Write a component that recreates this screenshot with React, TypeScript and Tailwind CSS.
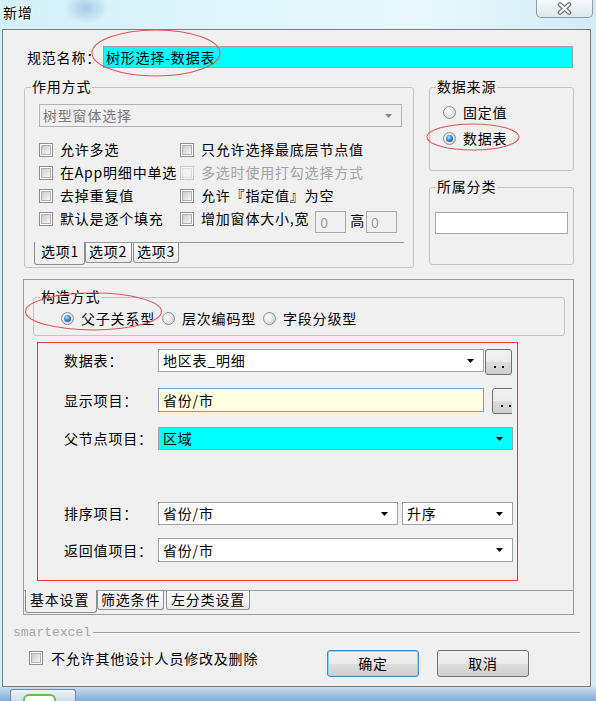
import React from "react";

function Arrow({ gray }: { gray?: boolean }) {
  return (
    <svg width="7" height="4" viewBox="0 0 7 4" className="shrink-0">
      <path d="M0 0H7L3.5 4Z" fill={gray ? "#8a8a8a" : "#000000"} />
    </svg>
  );
}

function CB({ disabled }: { disabled?: boolean }) {
  return disabled ? (
    <span className="flex w-[14px] h-[14px] shrink-0 border border-[#c9c9c9] bg-[#f7f7f7] p-[1px]">
      <span className="block w-full h-full border border-[#dcdcdc] bg-[#f2f2f2]" />
    </span>
  ) : (
    <span className="flex w-[14px] h-[14px] shrink-0 border border-[#8e8f8f] bg-white p-[1px]">
      <span className="block w-full h-full border border-[#b0b0b0] bg-[linear-gradient(135deg,#cbcbcb,#f8f8f8)]" />
    </span>
  );
}

function Radio({ checked }: { checked?: boolean }) {
  return (
    <span className="flex w-[13px] h-[13px] shrink-0 rounded-full border border-[#8e8f8f] bg-[radial-gradient(circle_at_35%_35%,#ffffff,#e0e0e0_60%,#c4c4c4)] items-center justify-center">
      {checked && (
        <span className="block w-[7px] h-[7px] rounded-full bg-[radial-gradient(circle_at_40%_35%,#c4ecff_0%,#3b8fd6_40%,#0b4a88_100%)]" />
      )}
    </span>
  );
}

function Check({ label, disabled }: { label: React.ReactNode; disabled?: boolean }) {
  return (
    <div className="flex items-center gap-[7px]">
      <CB disabled={disabled} />
      <span className={disabled ? "-mt-px text-[#a3a3a3]" : "-mt-px"}>{label}</span>
    </div>
  );
}

function Group({
  title,
  className,
  children,
}: {
  title: string;
  className: string;
  children?: React.ReactNode;
}) {
  return (
    <div className={"relative flex flex-col border border-[#c4c4c4] rounded-[3px] " + className}>
      <span className="absolute -top-[10px] left-[6px] px-[1px] bg-[#f0f0f0] leading-[16px]">{title}</span>
      {children}
    </div>
  );
}

function Combo({ className, text }: { className: string; text?: string }) {
  return (
    <div className={"flex items-center justify-between border border-[#a3a3a3] pl-[4px] pr-[9px] " + className}>
      <span className="-mt-px">{text}</span>
      <Arrow />
    </div>
  );
}

function DotsBtn() {
  return (
    <div className="flex w-[27px] h-[26px] rounded-[3px] border border-[#707070] bg-[linear-gradient(#f2f2f2_0%,#ebebeb_50%,#dddddd_51%,#cfcfcf_100%)] items-end justify-center gap-[6px] pb-[6px] pl-[1px]">
      <span className="block w-[2px] h-[2px] bg-black" />
      <span className="block w-[2px] h-[2px] bg-black" />
    </div>
  );
}

function Btn({ children, focus }: { children: React.ReactNode; focus?: boolean }) {
  return (
    <div
      className={
        "flex w-[92px] h-[27px] rounded-[3px] items-center justify-center bg-[linear-gradient(#f2f2f2_0%,#ebebeb_50%,#dddddd_51%,#cfcfcf_100%)] " +
        (focus
          ? "border border-[#3c8fc4] shadow-[inset_0_0_0_1px_#7fdaf7]"
          : "border border-[#707070]")
      }
    >
      <span className="-mt-px">{children}</span>
    </div>
  );
}

export default function App() {
  return (
    <div className="relative w-[596px] h-[701px] overflow-hidden bg-[radial-gradient(ellipse_22px_16px_at_86px_8px,rgba(80,130,200,0.35),transparent),linear-gradient(90deg,#d2f0f8_0%,#dff5fb_40%,#e8f8fc_70%,#d3ebf5_100%)] font-['Noto_Sans_CJK_SC','Noto_Sans',sans-serif] text-[14px] leading-[16px] tracking-[0.8px] text-black">
      {/* Title bar */}
      <div className="h-[29px] flex items-start justify-between">
        <span className="ml-[3px] mt-[4px] [text-shadow:0_0_6px_#ffffff,0_0_3px_#ffffff]">新增</span>
        <div className="mr-[3px] w-[57px] h-[18px] rounded-b-[5px] border border-t-0 border-[#8f9ea8] bg-[linear-gradient(#f5f9fb,#dbe7ee)] flex items-center justify-center">
          <svg width="17" height="13" viewBox="0 0 17 13">
            <path d="M4 2.5L13 10.5M13 2.5L4 10.5" stroke="#7a7a7a" strokeWidth="4.6" strokeLinecap="round" />
            <path d="M4 2.5L13 10.5M13 2.5L4 10.5" stroke="#f2f2f2" strokeWidth="2.2" strokeLinecap="round" />
          </svg>
        </div>
      </div>

      {/* Window body */}
      <div className="ml-[2px] w-[589px] h-[658px] border border-[#7c7c7c] bg-[#f0f0f0] flex flex-col">
        {/* name row */}
        <div className="mt-[16px] pl-[24px] flex items-center">
          <span className="w-[76px] -mt-px">规范名称：</span>
          <div className="w-[470px] h-[22px] bg-[#00ffff] border border-[#a0a0a0] pl-[2px] flex items-center">
            <span className="-mt-px">树形选择-数据表</span>
          </div>
        </div>

        {/* groups row */}
        <div className="mt-[19px] pl-[21px] flex gap-[15px]">
          <Group title="作用方式" className="w-[390px] h-[181px] shrink-0">
            <div className="mt-[16px] ml-[14px] w-[363px] h-[23px] border border-[#b0b4b8] flex items-center justify-between pl-[3px] pr-[9px] text-[#7a7a7a]">
              <span className="-mt-px">树型窗体选择</span>
              <Arrow gray />
            </div>
            <div className="mt-[11px] ml-[14px] flex flex-col">
              <div className="flex h-[23px] items-center">
                <div className="w-[141px]">
                  <Check label="允许多选" />
                </div>
                <Check label="只允许选择最底层节点值" />
              </div>
              <div className="flex h-[23px] items-center">
                <div className="w-[141px]">
                  <Check label="在App明细中单选" />
                </div>
                <Check label="多选时使用打勾选择方式" disabled />
              </div>
              <div className="flex h-[23px] items-center">
                <div className="w-[141px]">
                  <Check label="去掉重复值" />
                </div>
                <Check label="允许『指定值』为空" />
              </div>
              <div className="flex h-[23px] items-center">
                <div className="w-[141px]">
                  <Check label="默认是逐个填充" />
                </div>
                <div className="flex items-center">
                  <CB />
                  <span className="ml-[7px] -mt-px">增加窗体大小,宽</span>
                  <div className="mt-[6px] ml-[6px] w-[31px] h-[22px] border border-[#a8a8a8] pl-[4px] text-[#9a9a9a] flex items-center">
                    0
                  </div>
                  <span className="mt-[3px] ml-[4px]">高</span>
                  <div className="mt-[6px] ml-[1px] w-[31px] h-[22px] border border-[#a8a8a8] pl-[4px] text-[#9a9a9a] flex items-center">
                    0
                  </div>
                </div>
              </div>
            </div>
            {/* tab strip */}
            <div className="mt-[12px] ml-[9px] w-[370px] border-t border-[#9a9a9a] flex items-start">
              <div className="-mt-px h-[23px] w-[51px] border border-t-0 border-[#8c8e94] rounded-b-[3px] bg-[#f0f0f0] pl-[6px] pt-[1px]">
                选项1
              </div>
              <div className="h-[20px] w-[47px] border border-t-0 border-[#8c8e94] rounded-b-[3px] bg-[linear-gradient(#fdfdfd,#ececec)] pl-[3px]">
                选项2
              </div>
              <div className="ml-[1px] h-[20px] w-[46px] border border-t-0 border-[#8c8e94] rounded-b-[3px] bg-[linear-gradient(#fdfdfd,#ececec)] pl-[3px]">
                选项3
              </div>
            </div>
          </Group>

          <div className="w-[145px] flex flex-col">
            <Group title="数据来源" className="h-[84px]">
              <div className="mt-[16px] ml-[13px] flex flex-col gap-[10px]">
                <div className="flex h-[16px] items-center gap-[7px]">
                  <Radio />
                  <span className="-mt-px">固定值</span>
                </div>
                <div className="flex h-[16px] items-center gap-[7px]">
                  <Radio checked />
                  <span className="-mt-px">数据表</span>
                </div>
              </div>
            </Group>
            <Group title="所属分类" className="mt-[16px] h-[78px]">
              <div className="mt-[24px] ml-[5px] w-[133px] h-[22px] bg-white border border-[#a8a8a8]" />
            </Group>
          </div>
        </div>

        {/* tab panel */}
        <div className="mt-[11px] ml-[20px] w-[551px] h-[336px] border border-[#9c9c9c] flex flex-col">
          <div className="h-[311px] border-b border-[#9c9c9c] flex flex-col">
            <Group title="构造方式" className="mt-[17px] ml-[9px] w-[532px] h-[39px]">
              <div className="mt-[12px] ml-[27px] flex items-center gap-[7px] h-[16px]">
                <Radio checked />
                <span className="-mt-px">父子关系型</span>
                <Radio />
                <span className="-mt-px">层次编码型</span>
                <Radio />
                <span className="-mt-px">字段分级型</span>
              </div>
            </Group>

            <div className="mt-[6px] ml-[13px] w-[481px] h-[239px] border border-[#e8393a] flex flex-col">
              <div className="mt-[6px] pl-[26px] flex items-start">
                <span className="w-[94px] h-[22px] flex items-center">数据表：</span>
                <Combo className="w-[326px] h-[23px] bg-white" text="地区表_明细" />
                <div className="ml-[1px]">
                  <DotsBtn />
                </div>
              </div>
              <div className="mt-[13px] pl-[26px] flex items-start">
                <span className="w-[94px] h-[23px] flex items-center">显示项目：</span>
                <div className="w-[326px] h-[24px] bg-[#ffffe1] border border-[#7f9db9] pl-[4px] flex items-center">
                  <span className="-mt-px">省份/市</span>
                </div>
                <div className="ml-[8px] w-[20px] h-[26px] overflow-hidden">
                  <DotsBtn />
                </div>
              </div>
              <div className="mt-[13px] pl-[26px] flex items-start">
                <span className="w-[94px] h-[22px] flex items-center">父节点项目：</span>
                <Combo className="w-[355px] h-[23px] bg-[#00ffff]" text="区域" />
              </div>
              <div className="mt-[52px] pl-[26px] flex items-start">
                <span className="w-[94px] h-[22px] flex items-center">排序项目：</span>
                <Combo className="w-[240px] h-[23px] bg-white" text="省份/市" />
                <Combo className="ml-[4px] w-[111px] h-[23px] bg-white" text="升序" />
              </div>
              <div className="mt-[13px] pl-[26px] flex items-start">
                <span className="w-[94px] h-[23px] flex items-center">返回值项目：</span>
                <Combo className="w-[355px] h-[24px] bg-white" text="省份/市" />
              </div>
            </div>
          </div>
          <div className="h-[23px] flex items-start">
            <div className="ml-[1px] -mt-px h-[23px] w-[72px] border border-t-0 border-[#8c8e94] rounded-b-[3px] bg-[#f0f0f0] pl-[4px] pt-[1px]">
              基本设置
            </div>
            <div className="h-[19px] w-[67px] border border-t-0 border-[#8c8e94] rounded-b-[3px] bg-[linear-gradient(#fdfdfd,#ececec)] pl-[3px]">
              筛选条件
            </div>
            <div className="ml-[2px] h-[19px] w-[84px] border border-t-0 border-[#8c8e94] rounded-b-[3px] bg-[linear-gradient(#fdfdfd,#ececec)] pl-[4px]">
              左分类设置
            </div>
          </div>
        </div>

        {/* smartexcel separator */}
        <div className="mt-[10px] pl-[10px] pr-[10px] h-[16px] flex items-center">
          <span className="font-['Liberation_Mono',monospace] text-[13px] tracking-[0px] text-[#a6a6a6]">smartexcel</span>
          <div className="ml-[2px] flex-1 h-[2px] border-t border-[#a0a0a0] border-b border-b-white" />
        </div>

        {/* bottom row */}
        <div className="mt-[9px] pl-[26px] flex items-start">
          <div className="mt-[1px] h-[14px] flex items-center gap-[8px]">
            <CB />
            <span className="-mt-px">不允许其他设计人员修改及删除</span>
          </div>
          <div className="ml-auto mr-[61px] flex gap-[18px]">
            <Btn focus>确定</Btn>
            <Btn>取消</Btn>
          </div>
        </div>
      </div>

      {/* Taskbar */}
      <div className="h-[14px] flex items-end bg-[linear-gradient(#c8def1,#a3c5e4_50%,#86acd6)]">
        <div className="ml-[10px] w-[66px] h-[12px] rounded-t-[3px] border border-b-0 border-[#6f8aa8] bg-[linear-gradient(#eef3f7,#cfdce8)] flex items-end">
          <div className="ml-[12px] w-[33px] h-[7px] rounded-t-[6px] border-2 border-b-0 border-[#6cb851] bg-white" />
        </div>
      </div>

      {/* annotation ellipses */}
      <svg className="absolute left-0 top-0 pointer-events-none" width="596" height="701" viewBox="0 0 596 701">
        <ellipse cx="156" cy="53" rx="64" ry="23" fill="none" stroke="#e05558" strokeWidth="1.1" />
        <ellipse cx="473" cy="137" rx="46" ry="13" fill="none" stroke="#e05558" strokeWidth="1.1" />
        <ellipse cx="93.5" cy="311.5" rx="68" ry="18.5" fill="none" stroke="#e05558" strokeWidth="1.1" />
      </svg>
    </div>
  );
}
